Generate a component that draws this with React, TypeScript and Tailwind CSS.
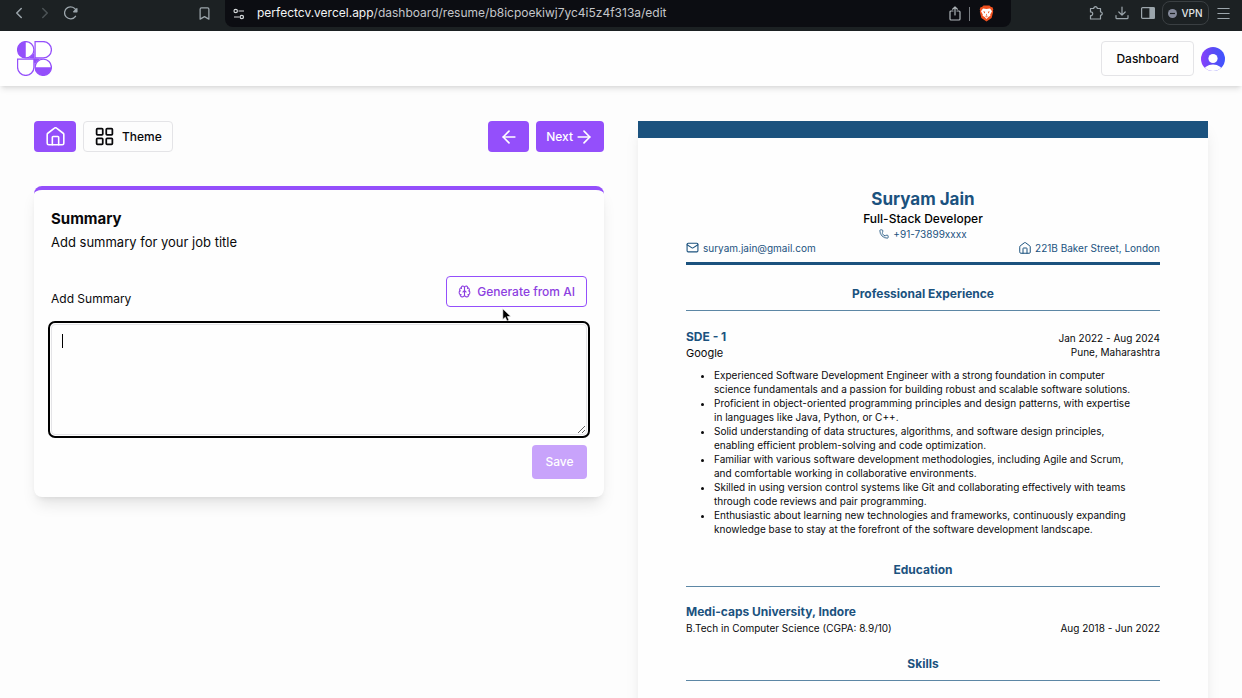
import {
  ArrowLeft,
  ArrowRight,
  Bookmark,
  Brain,
  ChevronLeft,
  ChevronRight,
  LayoutGrid,
  Mail,
  Menu,
  Phone,
} from "lucide-react";

const bullets = [
  "Experienced Software Development Engineer with a strong foundation in computer science fundamentals and a passion for building robust and scalable software solutions.",
  "Proficient in object-oriented programming principles and design patterns, with expertise in languages like Java, Python, or C++.",
  "Solid understanding of data structures, algorithms, and software design principles, enabling efficient problem-solving and code optimization.",
  "Familiar with various software development methodologies, including Agile and Scrum, and comfortable working in collaborative environments.",
  "Skilled in using version control systems like Git and collaborating effectively with teams through code reviews and pair programming.",
  "Enthusiastic about learning new technologies and frameworks, continuously expanding knowledge base to stay at the forefront of the software development landscape.",
];

function HouseIcon({ size, stroke = 2 }: { size: number; stroke?: number }) {
  return (
    <svg width={size} height={size} viewBox="0 0 24 24" fill="none" stroke="currentColor" strokeWidth={stroke} strokeLinecap="round" strokeLinejoin="round" aria-hidden="true">
      <path d="M1.500 9.500a2 2 0 0 1 .8-1.600l8.400-6.400a2 2 0 0 1 2.600 0l8.400 6.400a2 2 0 0 1 .8 1.600V20.500a2 2 0 0 1-2 2h-17a2 2 0 0 1-2-2z" />
      <path d="M8 22.500V13a1 1 0 0 1 1-1h6a1 1 0 0 1 1 1v9.500" />
    </svg>
  );
}

function Logo() {
  return (
    <svg width="35" height="35" viewBox="0 0 36 36" fill="none" aria-hidden="true">
      <path d="M18 9V18H27A9 9 0 0 0 18 27V18H9A9 9 0 0 0 18 9Z" fill="#944ffb" />
      <circle cx="9" cy="9" r="8.400" fill="#fff" stroke="#944ffb" strokeWidth="1.300" />
      <path d="M9 .5a8.500 8.500 0 0 0 0 17z" fill="#944ffb" />
      <path d="M13 17.500 17.500 13v10L23 18.500z" fill="#944ffb" />
      <path d="M18.600 .6H27a8.400 8.400 0 0 1 0 16.800h-8.400z" fill="#fff" stroke="#944ffb" strokeWidth="1.300" />
      <path d="M.6 18.600h16.800V27a8.400 8.400 0 0 1-16.800 0z" fill="#fff" stroke="#944ffb" strokeWidth="1.300" />
      <circle cx="27" cy="27" r="8.400" fill="#fff" stroke="#944ffb" strokeWidth="1.300" />
      <path d="M18.500 27a8.500 8.500 0 0 0 17 0z" fill="#944ffb" />
    </svg>
  );
}

function Avatar() {
  return (
    <svg width="24" height="24" viewBox="0 0 24 24" aria-hidden="true">
      <defs>
        <linearGradient id="avatar" x1="0" y1="0" x2="1" y2="0">
          <stop offset="0" stopColor="#8a3ffc" />
          <stop offset=".5" stopColor="#5a4bf5" />
          <stop offset="1" stopColor="#3e54ff" />
        </linearGradient>
        <clipPath id="avatar-clip">
          <circle cx="12" cy="12" r="12" />
        </clipPath>
      </defs>
      <g clipPath="url(#avatar-clip)">
        <rect width="24" height="24" fill="url(#avatar)" />
        <circle cx="12" cy="11.500" r="4.600" fill="#fefefe" />
        <ellipse cx="12" cy="25" rx="10" ry="7.500" fill="#fefefe" />
      </g>
    </svg>
  );
}

function BrowserBar() {
  return (
    <div className="flex h-[31px] shrink-0 items-start bg-[#1c2123] text-[#9ca6ac]">
      <nav aria-label="Browser navigation" className="flex w-[225px] items-center pt-1 pl-[10px]">
        <button aria-label="Back"><ChevronLeft size={18} strokeWidth={2} /></button>
        <button aria-label="Forward" className="ml-2 text-[#4c5356]"><ChevronRight size={18} strokeWidth={2} /></button>
        <button aria-label="Reload" className="ml-[10px]">
          <svg width="14" height="14" viewBox="0 0 14 14" fill="none" stroke="currentColor" strokeWidth="1.300" strokeLinecap="round">
            <path d="M11.500 10.300A6 6 0 1 1 12.300 5" />
            <path d="M12.900 2.600v3.200H9.700z" fill="currentColor" strokeLinejoin="round" />
          </svg>
        </button>
        <button aria-label="Bookmark" className="ml-auto mr-[13px]"><Bookmark size={15} strokeWidth={2} /></button>
      </nav>
      <div className="flex h-[27px] min-w-0 flex-1 items-center rounded-b-lg bg-[#0c0d12] pl-2">
        <svg width="12" height="12" viewBox="0 0 12 12" fill="none" stroke="#d5d8da" strokeWidth="1.200" aria-hidden="true">
          <circle cx="2.700" cy="3" r="1.700" />
          <path d="M5.500 3H11M1 9h5.500" />
          <circle cx="8.800" cy="9" r="1.700" />
        </svg>
        <span className="ml-3 truncate pb-px text-[12px] leading-6 text-[#c4c6ca]">
          <span className="text-[#f3f4f5]">perfectcv.vercel.app</span>/dashboard/resume/b8icpoekiwj7yc4i5z4f313a/edit
        </span>
        <div className="mr-[17px] ml-auto flex shrink-0 items-center">
          <svg width="12" height="15" viewBox="0 0 12 15" fill="none" stroke="#aeb4b8" strokeWidth="1.200" strokeLinecap="round" strokeLinejoin="round" aria-hidden="true">
            <path d="M4 5H2a1 1 0 0 0-1 1v7a1 1 0 0 0 1 1h8a1 1 0 0 0 1-1V6a1 1 0 0 0-1-1H8M6 9V1M3.600 3.200 6 1l2.400 2.200" />
          </svg>
          <span className="mr-[9px] ml-2 h-[14px] w-px bg-[#777b80]" />
          <svg width="15" height="17" viewBox="0 0 15 17" aria-hidden="true">
            <path d="M4.500.5h6L12 2l1.500.2.8 2.300-.5 1.200.4 1-1.600 6.300-5.100 3.500L2.400 13 .8 6.700l.4-1-.5-1.200.8-2.300L3 2z" fill="#f0501e" />
            <path d="M4 3.500 7.500 4l3.500-.5 2 2.700-1.800 3.200.2 1.300-2.100 1.200L7.500 14l-1.800-2.100-2.100-1.200.2-1.300L2 6.200z" fill="#fff" />
            <path d="m4.200 6.200 2 .5-.7 1.700zM10.800 6.200l-2 .5.7 1.700zM7.500 8.500l.6 1.700-.6.5-.6-.5zM5.600 10.600l1.900.9 1.900-.9-1.900 1.800z" fill="#f0501e" />
          </svg>
        </div>
      </div>
      <div className="flex w-[231px] items-center pt-[1px] pl-[78px]">
        <button aria-label="Extensions">
          <svg width="15" height="14" viewBox="0 0 15 14" fill="none" stroke="currentColor" strokeWidth="1.200" strokeLinejoin="round">
            <path d="M1.500 2.500h3.200a1.800 1.800 0 1 1 3.600 0h3.200v3.300a1.700 1.700 0 1 1 0 3.500v3.700H1.500V9.500a1.800 1.800 0 1 0 0-3.500z" />
          </svg>
        </button>
        <button aria-label="Downloads" className="ml-[11px]">
          <svg width="14" height="14" viewBox="0 0 14 14" fill="none" stroke="currentColor" strokeWidth="1.200" strokeLinecap="round" strokeLinejoin="round">
            <path d="M7 1v8M3.800 6 7 9.200 10.200 6M1 9.500v2.200a1 1 0 0 0 1 1h10a1 1 0 0 0 1-1V9.500" />
          </svg>
        </button>
        <button aria-label="Sidebar" className="ml-3">
          <svg width="14" height="12" viewBox="0 0 14 12" fill="none" stroke="currentColor" strokeWidth="1.200">
            <rect x=".6" y=".6" width="12.800" height="10.800" rx="1" />
            <path d="M9 1h4v10H9z" fill="currentColor" />
          </svg>
        </button>
        <button className="ml-[7px] flex h-6 w-[47px] items-center justify-center gap-1 rounded-lg border border-[#3a3f42] text-[10px] font-medium text-[#e3e5e7]">
          <svg width="9" height="9" viewBox="0 0 9 9" aria-hidden="true">
            <circle cx="4.500" cy="4.500" r="4.500" fill="#858a9b" />
            <path d="M2 4.500h5" stroke="#1c2123" strokeWidth="1.200" />
          </svg>
          VPN
        </button>
        <button aria-label="Menu" className="ml-[6px]"><Menu size={17} strokeWidth={1.5} /></button>
      </div>
    </div>
  );
}

function SectionTitle({ children }: { children: string }) {
  return (
    <h3 className="border-b border-[#5d87a5] pb-2 text-center text-[12px] leading-4 font-bold text-[#1b527e]">{children}</h3>
  );
}

function Resume() {
  return (
    <article className="border-t-[17px] border-[#1b527e] bg-[#fefefe] px-12 pt-[49px] pb-12 text-[10px] shadow-lg">
      <header className="border-b-[3px] border-[#1b527e] pb-2 text-center text-[#1b527e]">
        <h2 className="text-[17px] leading-6 font-bold">Suryam Jain</h2>
        <p className="text-[12px] leading-4 font-medium text-black">Full-Stack Developer</p>
        <p className="flex items-center justify-center gap-1 leading-[14px]">
          <Phone size={10} />+91-73899xxxx
        </p>
        <div className="flex justify-between leading-3">
          <span className="flex items-center gap-1"><Mail size={13} />suryam.jain@gmail.com</span>
          <span className="flex items-center gap-1"><HouseIcon size={12} />221B Baker Street, London</span>
        </div>
      </header>

      <section className="pt-[21px]">
        <SectionTitle>Professional Experience</SectionTitle>
        <div className="mt-[17px] flex justify-between">
          <div>
            <h4 className="text-[12px] leading-[17px] font-bold text-[#1b527e]">SDE - 1</h4>
            <p className="text-[11px] leading-[17px]">Google</p>
          </div>
          <div className="pt-[3px] text-right leading-[14px]">
            <p>Jan 2022 - Aug 2024</p>
            <p>Pune, Maharashtra</p>
          </div>
        </div>
        <ul className="mt-[6px] list-disc pr-[26px] pl-7 leading-[14px]">
          {bullets.map((text) => (
            <li key={text}>{text}</li>
          ))}
        </ul>
      </section>

      <section className="pt-[26px]">
        <SectionTitle>Education</SectionTitle>
        <h4 className="mt-[17px] text-[12px] leading-4 font-bold text-[#1b527e]">Medi-caps University, Indore</h4>
        <p className="flex justify-between leading-4">
          <span>B.Tech in Computer Science (CGPA: 8.9/10)</span>
          <span>Aug 2018 - Jun 2022</span>
        </p>
      </section>

      <section className="pt-5">
        <SectionTitle>Skills</SectionTitle>
      </section>
    </article>
  );
}

function Editor() {
  return (
    <div>
      <div className="flex items-center justify-between">
        <div className="flex gap-[7px]">
          <a href="#home" aria-label="Home" className="flex h-[31px] w-[42px] items-center justify-center rounded bg-[#944ffb] text-white">
            <HouseIcon size={19} />
          </a>
          <button className="flex h-[31px] items-center gap-[7px] rounded border border-[#e4e4e7] px-[10px] text-[12px] font-medium">
            <LayoutGrid size={21} strokeWidth={2} />Theme
          </button>
        </div>
        <div className="flex gap-[7px]">
          <button aria-label="Previous" className="flex h-[31px] w-[41px] items-center justify-center rounded bg-[#944ffb] text-white">
            <ArrowLeft size={20} />
          </button>
          <button className="flex h-[31px] items-center gap-px rounded bg-[#944ffb] px-[10px] text-[12px] font-medium text-white">
            Next<ArrowRight size={20} />
          </button>
        </div>
      </div>

      <section className="mt-[34px] rounded-lg border-t-4 border-[#944ffb] bg-[#fefefe] px-[17px] pt-[17px] pb-[18px] shadow-lg">
        <h2 className="text-[15px] leading-6 font-bold">Summary</h2>
        <p className="text-[13px] leading-[22px]">Add summary for your job title</p>
        <form className="mt-[23px]" onSubmit={(e) => e.preventDefault()}>
          <div className="flex items-end justify-between">
            <label htmlFor="summary" className="text-[12px] leading-[17px]">Add Summary</label>
            <div className="relative">
              <button type="button" className="flex h-[31px] items-center gap-[6px] rounded border border-[#944ffb] px-[11px] text-[12px] font-medium text-[#8d3fe0]">
                <Brain size={13} />Generate from AI
              </button>
              <svg className="absolute top-8 left-14" width="10" height="14" viewBox="0 0 10 14" aria-hidden="true">
                <path d="M.8.8v10.700l2.500-2.300 1.700 3.900 2-.8-1.700-3.800h3.500z" fill="#000" stroke="#fff" strokeWidth=".6" />
              </svg>
            </div>
          </div>
          <div className="relative mt-[17px]">
            <textarea id="summary" className="block h-[111px] w-full rounded border border-[#e4e4e7] bg-transparent px-[10px] py-2 text-[12px] outline-2 outline-offset-1 outline-black" />
            <span className="absolute top-[10px] left-[11px] h-[14px] w-px bg-black" />
          </div>
          <div className="mt-[10px] flex justify-end">
            <button disabled className="h-[34px] w-[55px] rounded bg-[#c8a3fb] text-[12px] font-medium text-white">Save</button>
          </div>
        </form>
      </section>
    </div>
  );
}

export default function App() {
  return (
    <div className="flex h-screen flex-col bg-[#fdfdfd] font-['Inter',sans-serif] text-[#09090b]">
      <BrowserBar />
      <header className="relative z-10 flex h-[55px] shrink-0 items-center justify-between bg-[#fefefe] px-[17px] shadow-md">
        <a href="#top" aria-label="PerfectCV"><Logo /></a>
        <div className="flex items-center gap-[7px]">
          <a href="#dashboard" className="flex h-[35px] items-center rounded border border-[#e4e4e7] px-[14px] text-[12px] font-medium">Dashboard</a>
          <button aria-label="Account"><Avatar /></button>
        </div>
      </header>
      <main className="min-h-0 flex-1 overflow-y-auto [scrollbar-width:none]">
        <div className="grid grid-cols-2 items-start gap-[34px] px-[34px] pt-[35px] pb-8">
          <Editor />
          <Resume />
        </div>
      </main>
    </div>
  );
}
